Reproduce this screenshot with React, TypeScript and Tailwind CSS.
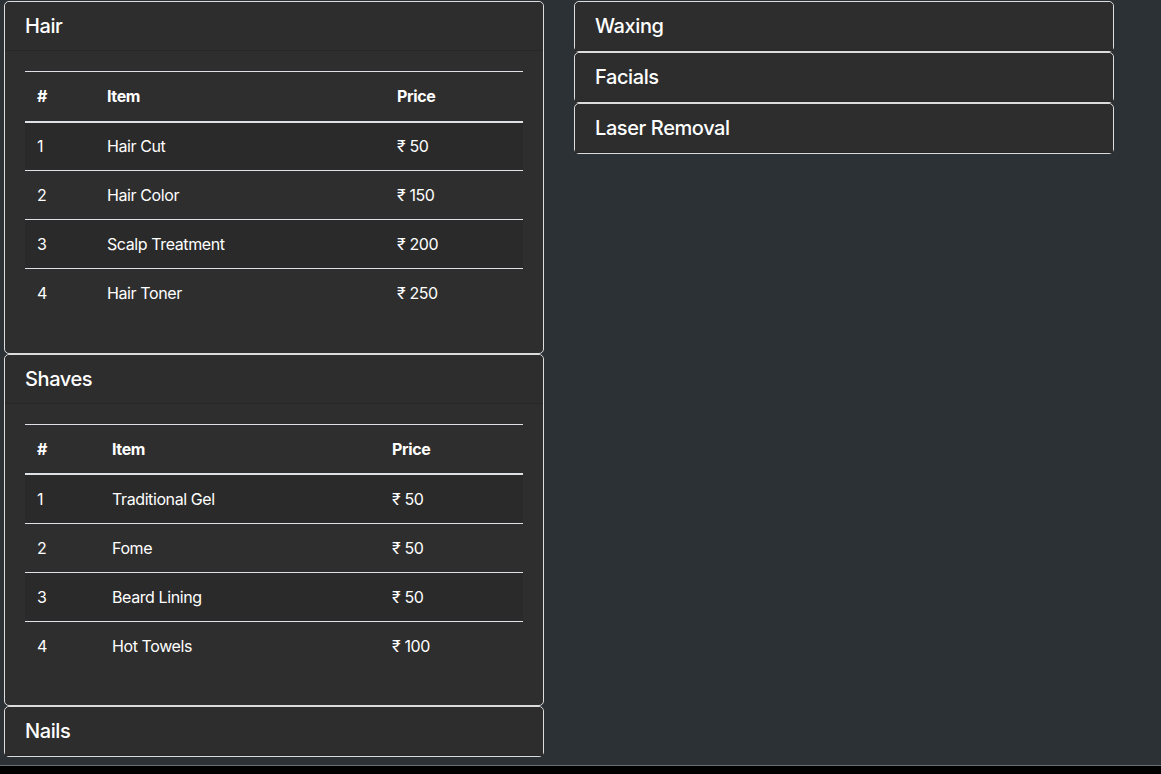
import React from 'react';

type Service = { name: string; price: number };

type Category = {
    title: string;
    items?: Service[];
    cols?: [string, string];
};

const leftColumn: Category[] = [
    {
        title: 'Hair',
        cols: ['w-[70px]', 'w-[290px]'],
        items: [
            { name: 'Hair Cut', price: 50 },
            { name: 'Hair Color', price: 150 },
            { name: 'Scalp Treatment', price: 200 },
            { name: 'Hair Toner', price: 250 },
        ],
    },
    {
        title: 'Shaves',
        cols: ['w-[75px]', 'w-[280px]'],
        items: [
            { name: 'Traditional Gel', price: 50 },
            { name: 'Fome', price: 50 },
            { name: 'Beard Lining', price: 50 },
            { name: 'Hot Towels', price: 100 },
        ],
    },
    { title: 'Nails' },
];

const rightColumn: Category[] = [{ title: 'Waxing' }, { title: 'Facials' }, { title: 'Laser Removal' }];

const PriceTable: React.FC<{ items: Service[]; cols: [string, string] }> = ({ items, cols }) => (
    <table className="w-full text-left border-collapse mb-[15px]">
        <thead>
            <tr className="border-t border-[#dee2e6]">
                <th className={`${cols[0]} px-3 h-[50px] font-bold border-b-2 border-[#dee2e6]`}>#</th>
                <th className={`${cols[1]} px-3 h-[50px] font-bold border-b-2 border-[#dee2e6]`}>Item</th>
                <th className="px-3 h-[50px] font-bold border-b-2 border-[#dee2e6]">Price</th>
            </tr>
        </thead>
        <tbody>
            {items.map((s, i) => (
                <tr
                    key={s.name}
                    className={`${i < items.length - 1 ? 'border-b border-[#dee2e6]' : ''} ${i % 2 === 0 ? 'bg-[#2a2a2a]' : ''}`}
                >
                    <td className="px-3 h-[49px]">{i + 1}</td>
                    <td className="px-3 h-[49px]">{s.name}</td>
                    <td className="px-3 h-[49px]">₹ {s.price}</td>
                </tr>
            ))}
        </tbody>
    </table>
);

const CategoryCard: React.FC<{ cat: Category }> = ({ cat }) => (
    <div className="bg-[#2e2e2e] border border-[#dcdcdc] rounded-[5px]">
        <div className="h-[49px] px-5 flex items-center border-b border-[#272727] bg-[#2d2d2d] rounded-t-[5px]">
            <h3 className="text-[20px] font-medium leading-6">{cat.title}</h3>
        </div>
        {cat.items && cat.cols && (
            <div className="p-5">
                <PriceTable items={cat.items} cols={cat.cols} />
            </div>
        )}
    </div>
);

export default function App() {
    return (
        <div
            className="bg-black h-[774px] text-white text-base tracking-[-0.025em]"
            style={{ fontFamily: 'Inter, "Noto Sans", sans-serif' }}
        >
            <div className="bg-[#2c3136] h-[766px] border-b border-[#6b6e72] pt-px pl-1">
                <div className="flex gap-[30px]">
                    <div className="w-[540px] flex flex-col">
                        {leftColumn.map(c => <CategoryCard key={c.title} cat={c} />)}
                    </div>
                    <div className="w-[540px] flex flex-col">
                        {rightColumn.map(c => <CategoryCard key={c.title} cat={c} />)}
                    </div>
                </div>
            </div>
        </div>
    );
}
